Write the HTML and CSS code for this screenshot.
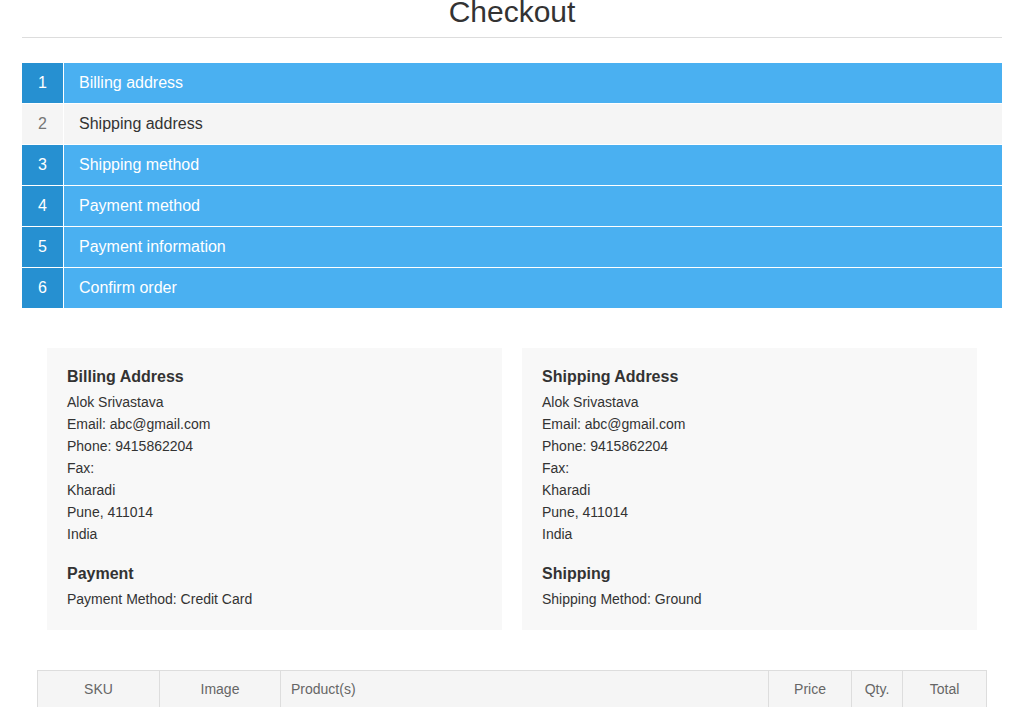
FILE: index.html
```html
<!DOCTYPE html>
<html>
<head>
<meta charset="utf-8">
<title>Checkout</title>
<link rel="stylesheet" href="styles.css">
</head>
<body>
<div class="page">
  <h1 class="title">Checkout</h1>
  <ol class="steps">
    <li class="step active"><span class="num">1</span><span class="label">Billing address</span></li>
    <li class="step current"><span class="num">2</span><span class="label">Shipping address</span></li>
    <li class="step active"><span class="num">3</span><span class="label">Shipping method</span></li>
    <li class="step active"><span class="num">4</span><span class="label">Payment method</span></li>
    <li class="step active"><span class="num">5</span><span class="label">Payment information</span></li>
    <li class="step active"><span class="num">6</span><span class="label">Confirm order</span></li>
  </ol>
  <div class="info">
    <div class="box">
      <h4 class="box-title">Billing Address</h4>
      <div class="lines">
        <div>Alok Srivastava</div>
        <div>Email: abc@gmail.com</div>
        <div>Phone: 9415862204</div>
        <div>Fax:</div>
        <div>Kharadi</div>
        <div>Pune, 411014</div>
        <div>India</div>
      </div>
      <h4 class="box-title sub">Payment</h4>
      <div class="lines">
        <div>Payment Method: Credit Card</div>
      </div>
    </div>
    <div class="box">
      <h4 class="box-title">Shipping Address</h4>
      <div class="lines">
        <div>Alok Srivastava</div>
        <div>Email: abc@gmail.com</div>
        <div>Phone: 9415862204</div>
        <div>Fax:</div>
        <div>Kharadi</div>
        <div>Pune, 411014</div>
        <div>India</div>
      </div>
      <h4 class="box-title sub">Shipping</h4>
      <div class="lines">
        <div>Shipping Method: Ground</div>
      </div>
    </div>
  </div>
  <div class="table-wrap">
    <table class="cart">
      <colgroup>
        <col class="c-sku"><col class="c-img"><col class="c-prod"><col class="c-price"><col class="c-qty"><col class="c-total">
      </colgroup>
      <thead>
        <tr>
          <th class="center">SKU</th>
          <th class="center">Image</th>
          <th class="left">Product(s)</th>
          <th class="center">Price</th>
          <th class="center">Qty.</th>
          <th class="center">Total</th>
        </tr>
      </thead>
    </table>
  </div>
</div>
</body>
</html>
```
FILE: styles.css
```css
html, body {
  margin: 0;
  padding: 0;
  background: #fff;
}
body {
  font-family: "Liberation Sans", Arial, sans-serif;
  color: #333;
  font-size: 14px;
}
.page {
  width: 980px;
  margin: 0 auto;
  padding: 0 22px;
}
.title {
  margin: -5px 0 0;
  padding-bottom: 9px;
  font-size: 30px;
  line-height: 33px;
  font-weight: normal;
  text-align: center;
  color: #333;
  border-bottom: 1px solid #ddd;
}
.steps {
  list-style: none;
  margin: 25px 0 0;
  padding: 0;
}
.step {
  display: flex;
  height: 40px;
  border-bottom: 1px solid #fff;
  font-size: 16px;
  line-height: 40px;
}
.step .num {
  width: 41px;
  text-align: center;
  border-right: 1px solid #fff;
  flex: none;
}
.step .label {
  padding-left: 15px;
}
.step.active {
  background: #4ab0f1;
  color: #fff;
}
.step.active .num {
  background: #2690d1;
}
.step.current {
  background: #f5f5f5;
  color: #333;
}
.step.current .num {
  color: #777;
}
.info {
  display: grid;
  grid-template-columns: 1fr 1fr;
  gap: 20px;
  padding: 0 25px;
  margin-top: 39px;
}
.box {
  background: #f8f8f8;
  padding: 18px 20px 20px;
}
.box-title {
  margin: 0 0 3px;
  font-size: 16px;
  line-height: 22px;
  font-weight: bold;
  color: #333;
}
.box-title.sub {
  margin-top: 18px;
}
.lines {
  line-height: 22px;
}
.table-wrap {
  padding: 0 15px;
  margin-top: 40px;
}
.cart {
  width: 100%;
  border-collapse: collapse;
  table-layout: fixed;
}
.c-sku { width: 122px; }
.c-img { width: 121px; }
.c-price { width: 83px; }
.c-qty { width: 51px; }
.c-total { width: 84px; }
.cart th {
  background: #f5f5f5;
  border: 1px solid #ddd;
  font-weight: normal;
  color: #666;
  font-size: 14px;
  line-height: 20px;
  padding: 8px 10px;
}
.cart th.center { text-align: center; }
.cart th.left { text-align: left; }
```
